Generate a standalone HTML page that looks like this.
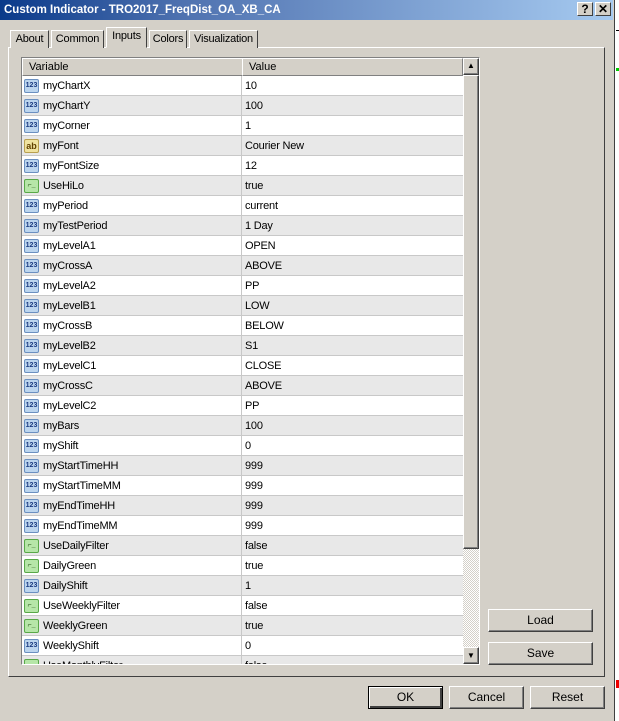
<!DOCTYPE html>
<html><head><style>
*{box-sizing:border-box;margin:0;padding:0}
body{width:619px;height:721px;overflow:hidden;background:#fff;font-family:"Liberation Sans",sans-serif;font-size:11px;color:#000;position:relative}
.a{position:absolute}
#dlg{left:0;top:0;width:615px;height:721px;background:#d4d0c8;border-right:1px solid #404040}
#title{left:0;top:0;width:613px;height:20px;background:linear-gradient(90deg,#0a3a8a 0%,#4f72b0 30%,#a6caf0 100%);color:#fff;font-weight:bold;font-size:11.5px;line-height:20px;padding-left:4px}
.tb{top:2px;width:16px;height:14px;background:#d4d0c8;border:1px solid;border-color:#fff #404040 #404040 #fff;font-weight:bold;font-size:12px;line-height:12px;text-align:center;color:#000}
.tab{top:30px;height:18px;background:#d4d0c8;border:1px solid;border-color:#fff #404040 transparent #fff;border-bottom:none;line-height:16px;text-align:center;font-size:11px;letter-spacing:-0.2px;white-space:nowrap}
#panel{left:8px;top:47px;width:597px;height:630px;border:1px solid;border-color:#fff #404040 #404040 #fff}
#list{left:21px;top:57px;width:459px;height:608px;border:1px solid;border-color:#808080 #fff #fff #808080;background:#fff;overflow:hidden}
.hdr{left:0;top:0;height:18px;background:#d4d0c8;border:1px solid;border-color:#fff #808080 #808080 #fff;line-height:16px;padding-left:6px;font-size:11px}
.row{left:0;width:441px;height:20px;border-bottom:1px solid #c8c8c8;font-size:11px;line-height:20px;letter-spacing:-0.2px}
.row span{position:absolute}
.n{left:21px}.v{left:223px}
.div{left:219px;top:0;width:1px;height:20px;background:#c8c8c8}
.ic{left:2px;top:3px;width:15px;height:14px;border-radius:2px;font-size:7px;line-height:12px;text-align:center;font-weight:bold;letter-spacing:0}
.i1{background:#bcd5ee;border:1px solid #6a8fc0;color:#1a3a80}
.i2{background:#f0e3a0;border:1px solid #b8a050;color:#604000;font-size:9px}
.i3{background:#b6e6a8;border:1px solid #58a848;color:#205010}
.btn{height:23px;background:#d4d0c8;border:1px solid;border-color:#fff #404040 #404040 #fff;box-shadow:inset -1px -1px #808080;text-align:center;line-height:21px;font-size:12px}
</style></head><body>
<div id="dlg" class="a">
<div id="title" class="a">Custom Indicator - TRO2017_FreqDist_OA_XB_CA</div>
<div class="a tb" style="left:577px">?</div>
<div class="a tb" style="left:595px">✕</div>
<div id="panel" class="a"></div>
<div class="a tab" style="left:10px;width:39px">About</div>
<div class="a tab" style="left:51px;width:53px">Common</div>
<div class="a tab" style="left:106px;width:41px;top:27px;height:21px;background:#d4d0c8;z-index:2;border-bottom:1px solid #d4d0c8">Inputs</div>
<div class="a tab" style="left:149px;width:38px">Colors</div>
<div class="a tab" style="left:189px;width:69px">Visualization</div>
<div id="list" class="a">
<div class="a hdr" style="width:221px">Variable</div>
<div class="a hdr" style="left:220px;width:221px">Value</div>
<div id="rows"></div>
<div class="a" style="left:441px;top:0;width:16px;height:606px;background:repeating-conic-gradient(#d4d0c8 0 25%,#fff 0 50%) 0 0/2px 2px"></div>
<div class="a btn" style="left:441px;top:0;width:16px;height:17px;line-height:13px;font-size:8px">▲</div>
<div class="a btn" style="left:441px;top:17px;width:16px;height:474px"></div>
<div class="a btn" style="left:441px;top:589px;width:16px;height:17px;line-height:15px;font-size:8px">▼</div>
</div>
<div class="a btn" style="left:488px;top:609px;width:105px">Load</div>
<div class="a btn" style="left:488px;top:642px;width:105px">Save</div>
<div class="a btn" style="left:368px;top:686px;width:75px;border:1px solid #000;box-shadow:inset 1px 1px #fff,inset -2px -2px #404040">OK</div>
<div class="a btn" style="left:449px;top:686px;width:75px">Cancel</div>
<div class="a btn" style="left:530px;top:686px;width:75px">Reset</div>
</div>
<div class="a" style="left:616px;top:30px;width:3px;height:1px;background:#000"></div>
<div class="a" style="left:616px;top:68px;width:3px;height:3px;background:#0c0"></div>
<div class="a" style="left:616px;top:680px;width:3px;height:8px;background:#e00"></div>
<script>
var d=[["myChartX","10",1],["myChartY","100",1],["myCorner","1",1],["myFont","Courier New",2],["myFontSize","12",1],["UseHiLo","true",3],["myPeriod","current",1],["myTestPeriod","1 Day",1],["myLevelA1","OPEN",1],["myCrossA","ABOVE",1],["myLevelA2","PP",1],["myLevelB1","LOW",1],["myCrossB","BELOW",1],["myLevelB2","S1",1],["myLevelC1","CLOSE",1],["myCrossC","ABOVE",1],["myLevelC2","PP",1],["myBars","100",1],["myShift","0",1],["myStartTimeHH","999",1],["myStartTimeMM","999",1],["myEndTimeHH","999",1],["myEndTimeMM","999",1],["UseDailyFilter","false",3],["DailyGreen","true",3],["DailyShift","1",1],["UseWeeklyFilter","false",3],["WeeklyGreen","true",3],["WeeklyShift","0",1],["UseMonthlyFilter","false",3]];
var h="";d.forEach(function(r,i){var t=["","123","ab","⌐_"][r[2]];
h+='<div class="a row" style="top:'+(18+i*20)+'px;background:'+(i%2?'#e8e8e8':'#fff')+'"><span class="ic i'+r[2]+'">'+t+'</span><span class="n">'+r[0]+'</span><div class="a div"></div><span class="v">'+r[1]+'</span></div>';});
document.getElementById("rows").innerHTML=h;
</script>
</body></html>
